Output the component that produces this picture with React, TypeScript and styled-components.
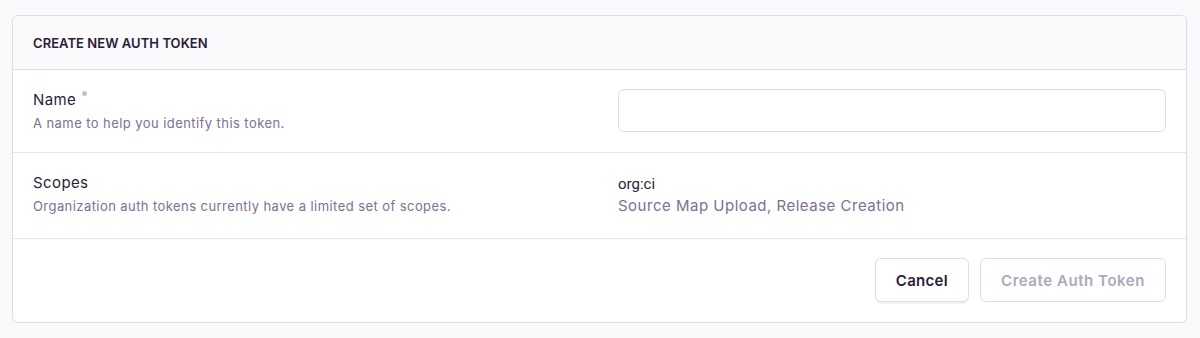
import React from "react";
import styled, { createGlobalStyle } from "styled-components";

const GlobalStyle = createGlobalStyle`
  body {
    margin: 0;
    background: #faf9fb;
    font-family: Inter, "Noto Sans", sans-serif;
    color: #2b1d38;
  }
`;

const Panel = styled.form`
  margin: 15px 13px 0 12px;
  background: #fff;
  border: 1px solid #e0dce5;
  border-radius: 6px;
  box-shadow: 0 1px 2px rgba(43, 34, 51, 0.04);
  overflow: hidden;
`;

const PanelHeader = styled.div`
  background: #faf9fb;
  border-bottom: 1px solid #e0dce5;
  padding: 0 20px;
  height: 53px;
  display: flex;
  align-items: center;
  font-size: 13px;
  font-weight: 600;
  text-transform: uppercase;
  letter-spacing: 0.05px;
  color: #2b1d38;
`;

const FieldRow = styled.div<{ $center?: boolean; $pad: string }>`
  display: grid;
  grid-template-columns: 1fr 548px;
  column-gap: 37px;
  align-items: ${(p) => (p.$center ? "center" : "start")};
  padding: ${(p) => p.$pad};
  border-bottom: 1px solid #e7e4eb;
`;

const FieldLabel = styled.div`
  display: flex;
  flex-direction: column;
  gap: 4px;
`;

const LabelText = styled.div`
  font-size: 15px;
  line-height: 20px;
  letter-spacing: 0.4px;
  color: #2b1d38;
  display: flex;
  align-items: flex-start;
  gap: 6px;
`;

const Required = styled.span`
  width: 5px;
  height: 5px;
  border-radius: 50%;
  background: #c4bfcc;
  margin-top: 1px;
`;

const HelpText = styled.div`
  font-size: 13px;
  line-height: 18px;
  letter-spacing: 0.43px;
  color: #80708f;
`;

const TextInput = styled.input`
  box-sizing: border-box;
  width: 100%;
  height: 43px;
  border: 1px solid #e0dce5;
  border-radius: 6px;
  box-shadow: inset 0 1px 2px rgba(43, 34, 51, 0.04);
  padding: 0 12px;
  font: inherit;
  font-size: 15px;
  outline: none;
`;

const ScopeValue = styled.div`
  display: flex;
  flex-direction: column;
  gap: 2px;
  padding-top: 1px;
`;

const ScopeName = styled.div`
  font-family: Roboto, "Liberation Sans", sans-serif;
  font-size: 15px;
  line-height: 20px;
  color: #2b1d38;
`;

const ScopeDesc = styled.div`
  font-size: 15px;
  line-height: 20px;
  letter-spacing: 0.5px;
  color: #80708f;
`;

const Footer = styled.div`
  display: flex;
  justify-content: flex-end;
  gap: 11px;
  padding: 19px 20px 20px;
`;

const Button = styled.button<{ $disabled?: boolean }>`
  height: 44px;
  padding: 0 20px;
  border: 1px solid #e0dce5;
  border-radius: 6px;
  background: #fff;
  box-shadow: ${(p) => (p.$disabled ? "none" : "0 2px 0 rgba(43, 34, 51, 0.06)")};
  font-family: Inter, "Noto Sans", sans-serif;
  font-size: 15px;
  font-weight: 600;
  letter-spacing: ${(p) => (p.$disabled ? "0.55px" : "0.3px")};
  color: ${(p) => (p.$disabled ? "#b0a7bb" : "#2b1d38")};
  cursor: ${(p) => (p.$disabled ? "not-allowed" : "pointer")};
`;

const App = () => (
  <>
    <GlobalStyle />
    <Panel onSubmit={(e) => e.preventDefault()}>
      <PanelHeader>Create New Auth Token</PanelHeader>
      <FieldRow $center $pad="19px 20px 20px">
        <FieldLabel>
          <LabelText>
            Name <Required />
          </LabelText>
          <HelpText>A name to help you identify this token.</HelpText>
        </FieldLabel>
        <TextInput type="text" aria-label="Name" />
      </FieldRow>
      <FieldRow $pad="20px 20px 22px">
        <FieldLabel>
          <LabelText>Scopes</LabelText>
          <HelpText>Organization auth tokens currently have a limited set of scopes.</HelpText>
        </FieldLabel>
        <ScopeValue>
          <ScopeName>org:ci</ScopeName>
          <ScopeDesc>Source Map Upload, Release Creation</ScopeDesc>
        </ScopeValue>
      </FieldRow>
      <Footer>
        <Button type="button">Cancel</Button>
        <Button type="submit" $disabled disabled>
          Create Auth Token
        </Button>
      </Footer>
    </Panel>
  </>
);

export default App;
